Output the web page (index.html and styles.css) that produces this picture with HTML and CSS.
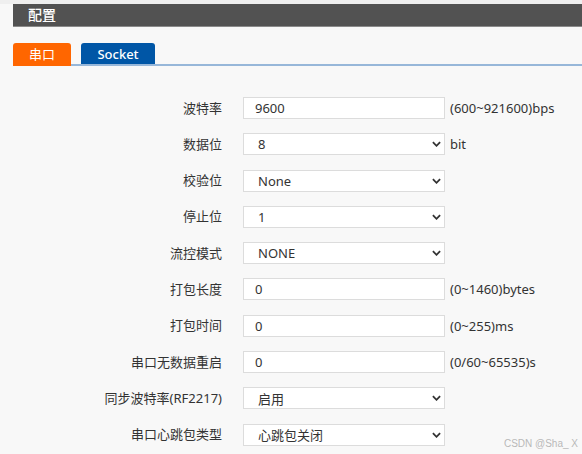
FILE: index.html
```html
<!DOCTYPE html>
<html lang="zh">
<head>
<meta charset="utf-8">
<title>配置</title>
<link rel="stylesheet" href="styles.css">
</head>
<body>
<div class="page">
  <div class="header"><span class="title">配置</span></div>
  <div class="tabs">
    <div class="tab tab-active">串口</div>
    <div class="tab tab-blue">Socket</div>
  </div>
  <div class="form">
    <div class="row">
      <div class="label">波特率</div>
      <div class="field"><span class="val val-input">9600</span></div>
      <div class="unit">(600~921600)bps</div>
    </div>
    <div class="row">
      <div class="label">数据位</div>
      <div class="field"><span class="val">8</span><svg class="chev" viewBox="0 0 10 6"><path d="M1 1 L5 5 L9 1" /></svg></div>
      <div class="unit">bit</div>
    </div>
    <div class="row">
      <div class="label">校验位</div>
      <div class="field"><span class="val">None</span><svg class="chev" viewBox="0 0 10 6"><path d="M1 1 L5 5 L9 1" /></svg></div>
      <div class="unit"></div>
    </div>
    <div class="row">
      <div class="label">停止位</div>
      <div class="field"><span class="val">1</span><svg class="chev" viewBox="0 0 10 6"><path d="M1 1 L5 5 L9 1" /></svg></div>
      <div class="unit"></div>
    </div>
    <div class="row">
      <div class="label">流控模式</div>
      <div class="field"><span class="val">NONE</span><svg class="chev" viewBox="0 0 10 6"><path d="M1 1 L5 5 L9 1" /></svg></div>
      <div class="unit"></div>
    </div>
    <div class="row">
      <div class="label">打包长度</div>
      <div class="field"><span class="val val-input">0</span></div>
      <div class="unit">(0~1460)bytes</div>
    </div>
    <div class="row">
      <div class="label">打包时间</div>
      <div class="field"><span class="val val-input">0</span></div>
      <div class="unit">(0~255)ms</div>
    </div>
    <div class="row">
      <div class="label">串口无数据重启</div>
      <div class="field"><span class="val val-input">0</span></div>
      <div class="unit">(0/60~65535)s</div>
    </div>
    <div class="row">
      <div class="label">同步波特率(RF2217)</div>
      <div class="field"><span class="val">启用</span><svg class="chev" viewBox="0 0 10 6"><path d="M1 1 L5 5 L9 1" /></svg></div>
      <div class="unit"></div>
    </div>
    <div class="row">
      <div class="label">串口心跳包类型</div>
      <div class="field"><span class="val">心跳包关闭</span><svg class="chev" viewBox="0 0 10 6"><path d="M1 1 L5 5 L9 1" /></svg></div>
      <div class="unit"></div>
    </div>
  </div>
  <div class="watermark">CSDN @Sha_ X</div>
</div>
</body>
</html>
```
FILE: styles.css
```css
html, body {
  margin: 0;
  padding: 0;
  background: #f8f8f8;
}
body {
  font-family: "Noto Sans", "Noto Sans CJK SC", sans-serif;
  color: #333;
  font-size: 13px;
}
.page {
  position: relative;
  width: 582px;
  height: 454px;
  overflow: hidden;
  padding-top: 4px;
  box-sizing: border-box;
}
.page::before {
  content: "";
  position: absolute;
  left: 0; top: 0; right: 0;
  height: 4px;
  background: #efefef;
}
.header {
  margin-left: 13px;
  height: 23px;
  background: #525252;
  display: flex;
  align-items: center;
  padding-left: 15px;
  box-sizing: border-box;
  border-bottom: 1px solid #8a8a8a;
}
.title {
  color: #fff;
  font-size: 14px;
  font-weight: 500;
  line-height: 1;
}
.tabs {
  margin-top: 16px;
  margin-left: 13px;
  display: flex;
  align-items: flex-end;
  gap: 10px;
  border-bottom: 2px solid #97b7d9;
  height: 21px;
}
.tab {
  height: 21px;
  display: flex;
  align-items: center;
  justify-content: center;
  color: #fff;
  font-size: 13px;
  border-radius: 3px 3px 0 0;
}
.tab-active {
  width: 58px;
  background: #ff6600;
  height: 23px;
  margin-bottom: -2px;
  padding-bottom: 2px;
  box-sizing: border-box;
}
.tab-blue {
  width: 74px;
  background: #0056a6;
  font-weight: 500;
}
.form {
  margin-top: 31px;
  display: flex;
  flex-direction: column;
  gap: 14.3px;
}
.row {
  display: grid;
  grid-template-columns: 222px 223px auto;
  align-items: center;
  height: 22px;
}
.label {
  text-align: right;
  font-size: 13px;
  white-space: nowrap;
  margin-top: -2px;
}
.field {
  margin-left: 21px;
  height: 22px;
  box-sizing: border-box;
  border: 1px solid #dcdcdc;
  background: #fff;
  display: flex;
  align-items: center;
  justify-content: space-between;
  padding: 0 3px 0 14px;
}
.val {
  font-size: 13px;
  color: #333;
}
.val-input {
  margin-left: -3px;
}
.chev {
  width: 9px;
  height: 6px;
  fill: none;
  stroke: #333;
  stroke-width: 2;
}
.unit {
  padding-left: 5px;
  font-size: 13px;
  white-space: nowrap;
}
.watermark {
  position: absolute;
  right: 4px;
  bottom: 5px;
  font-size: 10px;
  color: #b8b8b8;
  font-family: "Liberation Sans", sans-serif;
}
```
